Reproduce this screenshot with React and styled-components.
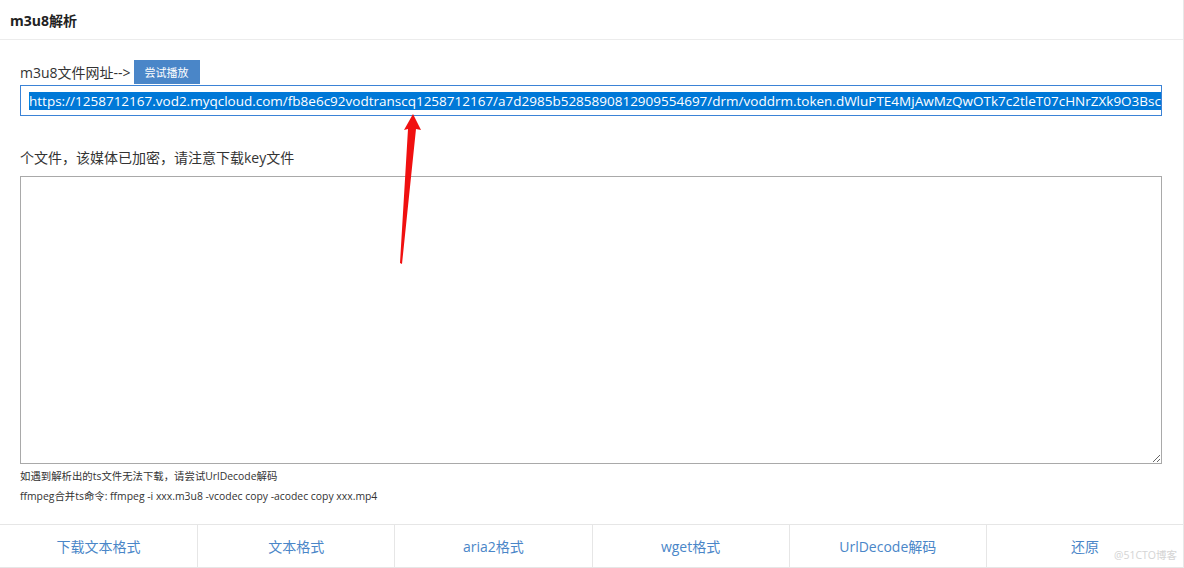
import React from 'react';
import styled, { createGlobalStyle } from 'styled-components';

const GlobalStyle = createGlobalStyle`
  html, body {
    margin: 0;
    padding: 0;
    background: #fff;
  }
  body {
    font-family: "Open Sans", "Noto Sans CJK SC", sans-serif;
    color: #333;
  }
`

const Panel = styled.div`
  position: relative;
  width: 1184px;
  height: 568px;
  box-sizing: border-box;
  border-right: 1px solid #e8e8e8;
  overflow: hidden;
`

const Header = styled.div`
  height: 39px;
  display: flex;
  align-items: center;
  padding-left: 10px;
  border-bottom: 1px solid #ececec;
  font-size: 14px;
  font-weight: bold;
  color: #222;
`

const Body = styled.div`
  padding: 20px 21px 0 20px;
`

const LabelRow = styled.div`
  display: flex;
  align-items: flex-end;
  height: 24px;
`

const Label = styled.span`
  font-size: 14px;
  color: #333;
  line-height: 20px;
  padding-bottom: 1px;
`

const TryButton = styled.button`
  height: 24px;
  width: 66px;
  margin-left: 3px;
  border: none;
  background: #4a86c8;
  color: #fff;
  font-size: 11px;
  font-family: inherit;
  padding: 0;
`

const UrlBox = styled.div`
  margin-top: 1px;
  height: 31px;
  box-sizing: border-box;
  border: 1px solid #3b83d6;
  padding: 0 8px;
  display: flex;
  align-items: center;
  white-space: nowrap;
  overflow: hidden;
  font-size: 13.5px;
`

const Selected = styled.span`
  background: #0078d7;
  color: #fff;
  line-height: 18px;
`

const Notice = styled.div`
  margin-top: 32px;
  font-size: 14px;
  line-height: 20px;
  color: #333;
`

const Output = styled.textarea`
  display: block;
  margin-top: 8px;
  width: 100%;
  height: 288px;
  box-sizing: border-box;
  border: 1px solid #a9a9a9;
  outline: none;
  resize: both;
  font-family: inherit;
`

const Tip = styled.div`
  font-size: 10.4px;
  line-height: 20px;
  color: #333;
  margin-top: ${({ first }) => (first ? '2px' : '0')};
`

const Footer = styled.div`
  margin-top: 18px;
  display: grid;
  grid-template-columns: repeat(6, 1fr);
  border-top: 1px solid #e6e6e6;
  border-bottom: 1px solid #e6e6e6;
  height: 44px;
  box-sizing: border-box;
`

const FootButton = styled.div`
  display: flex;
  align-items: center;
  justify-content: center;
  font-size: 14px;
  color: #4a86c8;
  border-left: ${({ first }) => (first ? 'none' : '1px solid #e6e6e6')};
`

const Arrow = styled.svg`
  position: absolute;
  left: 395px;
  top: 110px;
`

const Watermark = styled.span`
  position: absolute;
  right: 6px;
  bottom: 6px;
  font-size: 10.5px;
  color: #d4d4d4;
`

const url = 'https://1258712167.vod2.myqcloud.com/fb8e6c92vodtranscq1258712167/a7d2985b5285890812909554697/drm/voddrm.token.dWluPTE4MjAwMzQwOTk7c2tleT07cHNrZXk9O3Bsc2'

const buttons = ['下载文本格式', '文本格式', 'aria2格式', 'wget格式', 'UrlDecode解码', '还原']

const App = () => {
    return (
        <>
            <GlobalStyle />
            <Panel>
                <Header>m3u8解析</Header>
                <Body>
                    <LabelRow>
                        <Label>m3u8文件网址--&gt;</Label>
                        <TryButton>尝试播放</TryButton>
                    </LabelRow>
                    <UrlBox>
                        <Selected>{url}</Selected>
                    </UrlBox>
                    <Notice>个文件，该媒体已加密，请注意下载key文件</Notice>
                    <Output />
                    <Tip first>如遇到解析出的ts文件无法下载，请尝试UrlDecode解码</Tip>
                    <Tip>ffmpeg合并ts命令: ffmpeg -i xxx.m3u8 -vcodec copy -acodec copy xxx.mp4</Tip>
                </Body>
                <Footer>
                    {buttons.map((b, i) => (
                        <FootButton key={b} first={i === 0}>{b}</FootButton>
                    ))}
                </Footer>
                <Arrow width="30" height="160" viewBox="0 0 30 160">
                    <polygon points="18,4 26,20 21,19 7,154 5,153 13,19 9,20" fill="#f01010" />
                </Arrow>
                <Watermark>@51CTO博客</Watermark>
            </Panel>
        </>
    );
}

export default App;
